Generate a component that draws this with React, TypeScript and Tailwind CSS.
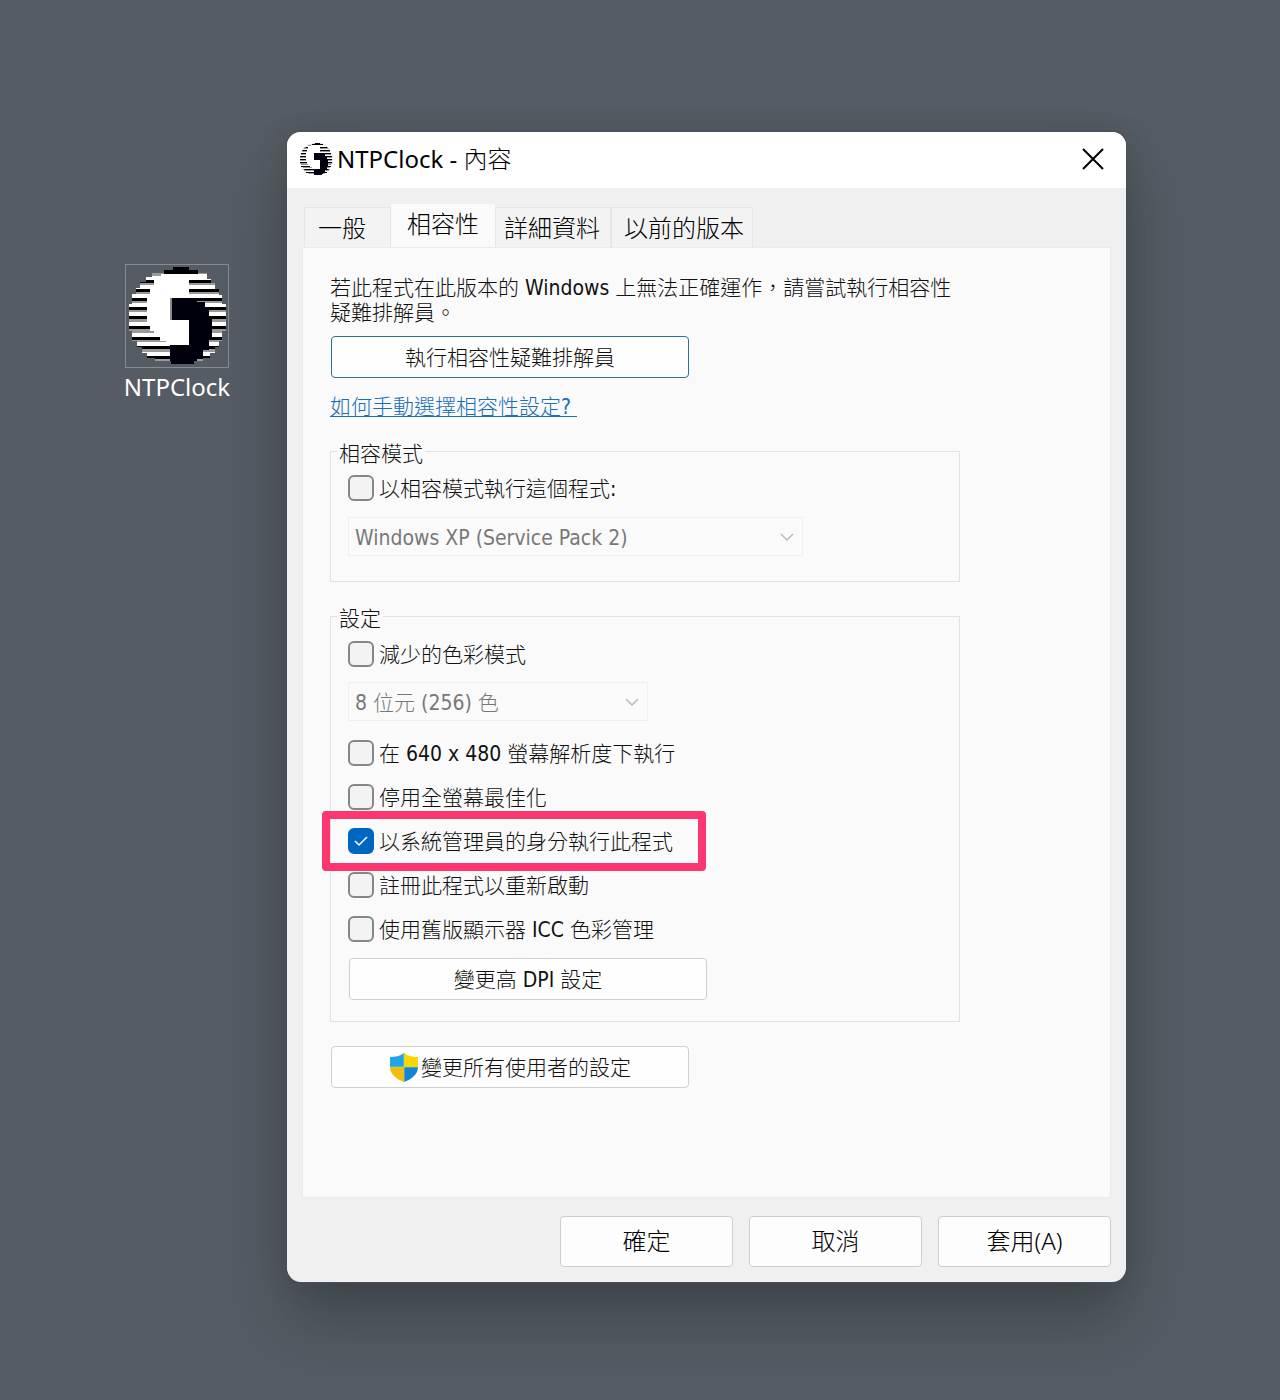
import React, { useState } from 'react';
import clsx from 'clsx';

const TABS = [
  { label: '一般', className: 'w-[87px] pl-[13px]' },
  { label: '相容性', className: 'w-[104px] pl-4' },
  { label: '詳細資料', className: 'w-[116px] pl-2' },
  { label: '以前的版本', className: 'w-[142px] pl-3' },
];

// Rows of the striped globe behind the clock logo
const STRIPES = [16, 25, 34, 43, 52, 62, 73, 82, 92];

const ClockLogo: React.FC<{ className?: string; id: string }> = ({ className, id }) => (
  <svg viewBox="1 1 102 102" className={className} shapeRendering="crispEdges" aria-hidden="true">
    <defs>
      <clipPath id={id}>
        <path d="M48 3h16v3h9v3h9v6h4v4h4v6h4v6h3v9h4v27h-4v10h-3v6h-4v6h-5v5h-7v3h-9v3H46v-3H30v-3h-8v-5h-5v-6h-5v-6H7V67H4V40h3V30h4v-6h4v-6h6v-5h6V9h12V6h9z" />
      </clipPath>
    </defs>
    <g clipPath={`url(#${id})`}>
      <rect width="104" height="104" fill="#9a9a9a" />
      {STRIPES.map((y) => (
        <React.Fragment key={y}>
          <rect y={y - 4} width="104" height="4" fill="#fff" />
          <rect y={y} width="104" height="3" fill="#000" />
        </React.Fragment>
      ))}
      <path d="M48 3h16v3h9v4H39V6h9z" fill="#000" />
      <path d="M36 10h28v70H41v-3h-6v-5h-6v-5h-4v-9h-3V31h3V21h4v-7h7z" fill="#fff" />
      <path d="M64 10h18v3H64z" fill="#fff" />
      <path d="M45 34h27v4h8v6h4v9h3v20h-3v13h-6v6h-6v8H45V81h19V56H45z" fill="#00000c" />
      <path d="M45 34h2v22h-2z" fill="#8a8a8a" />
    </g>
  </svg>
);

const Shield: React.FC = () => (
  <svg viewBox="0 0 30 30" className="size-[30px]" aria-hidden="true">
    <path d="M15 1C11 4 6 5 1 5v10h14z" fill="#22a5e8" />
    <path d="M15 1c4 3 9 4 14 4v10H15z" fill="#fdd800" />
    <path d="M1 15c0 7 6 12 14 15V15z" fill="#f0bd12" />
    <path d="M29 15c0 7-6 12-14 15V15z" fill="#1583d6" />
    <path d="M15 1v29M1 15h28" stroke="#b5d36a" strokeWidth="0.8" />
  </svg>
);

interface CheckProps {
  label: string;
  defaultChecked?: boolean;
  highlighted?: boolean;
}

const Check: React.FC<CheckProps> = ({ label, defaultChecked, highlighted }) => (
  <label className="relative flex w-fit items-center gap-[5px] whitespace-nowrap">
    <span className="grid size-[26px] shrink-0">
      <input
        type="checkbox"
        defaultChecked={defaultChecked}
        className="peer col-start-1 row-start-1 size-[26px] appearance-none rounded-[6px] border-2 border-[#868686] bg-[#f3f3f3] checked:border-[#0067c0] checked:bg-[#0067c0]"
      />
      <svg viewBox="0 0 26 26" className="pointer-events-none invisible col-start-1 row-start-1 peer-checked:visible" aria-hidden="true">
        <path d="M7 13l4 4 8-8" fill="none" stroke="#fff" strokeWidth="1.5" />
      </svg>
    </span>
    <span className="pt-[3px] leading-[23px]">{label}</span>
    {highlighted && (
      <span className="pointer-events-none absolute -inset-y-[17px] -left-[26px] -right-[33px] z-10 rounded-[4px] border-8 border-[#fb3670]" />
    )}
  </label>
);

const DisabledSelect: React.FC<{ value: string; label: string; className?: string }> = ({ value, label, className }) => (
  <div className={clsx('grid h-[39px] items-center', className)}>
    <select
      disabled
      aria-label={label}
      className="col-start-1 row-start-1 h-full w-full appearance-none border border-[#efefef] bg-[#fafafa] pl-[6px] pt-[3px] text-[#787878] opacity-100"
    >
      <option>{value}</option>
    </select>
    <svg viewBox="0 0 14 8" className="pointer-events-none col-start-1 row-start-1 mr-[9px] h-2 w-[14px] justify-self-end" aria-hidden="true">
      <path d="M1 1l6 6 6-6" fill="none" stroke="#b5b5b5" strokeWidth="1.3" />
    </svg>
  </div>
);

const Group: React.FC<{ title: string; className?: string; children: React.ReactNode }> = ({ title, className, children }) => (
  <fieldset className={clsx('min-w-0 border border-[#e2e2e2] pl-[17px]', className)}>
    <legend className="-ml-[11px] px-[2px] pt-[7px] leading-[23px]">{title}</legend>
    {children}
  </fieldset>
);

const PANEL_BUTTON = 'flex h-[42px] w-[358px] items-center justify-center rounded-[4px] border bg-[#fefefe]';

export default function App() {
  const [activeTab, setActiveTab] = useState('相容性');

  return (
    <main
      lang="zh-Hant"
      className="flex min-h-screen items-start gap-14 bg-[#555c63] pb-[118px] pl-[123px] pr-[154px] pt-[132px] font-['Noto_Sans','Noto_Sans_CJK_TC',sans-serif] text-black"
    >
      {/* Desktop shortcut */}
      <button type="button" className="mt-[132px] flex w-[108px] shrink-0 flex-col items-center text-2xl leading-[38px] text-white">
        <span className="border border-[#858c92]">
          <ClockLogo id="desktop-logo" className="size-[102px]" />
        </span>
        NTPClock
      </button>

      <section
        role="dialog"
        aria-label="NTPClock - 內容"
        className="min-w-0 flex-1 overflow-hidden rounded-[14px] bg-[#f0f0f0] shadow-[0_0_0_1px_#4b5157,0_0_30px_rgba(0,0,0,0.12),0_40px_60px_rgba(20,30,30,0.3)]"
      >
        <header className="flex h-14 items-center bg-white pb-[2px] pl-3 pr-[22px]">
          <ClockLogo id="title-logo" className="size-[34px]" />
          <h1 className="ml-1 flex-1 text-2xl leading-8 font-light">
            <span className="font-normal">NTPClock - </span>內容
          </h1>
          <button type="button" aria-label="關閉">
            <svg viewBox="0 0 22 22" className="size-[22px]" aria-hidden="true">
              <path d="M1 1l20 20M21 1L1 21" stroke="#000" strokeWidth="2" />
            </svg>
          </button>
        </header>

        <div className="px-[15px] pb-[15px] pt-4">
          {/* Tabs */}
          <div role="tablist" className="flex h-[43px] items-end pl-[2px] text-2xl font-light">
            {TABS.map((tab) => (
              <button
                key={tab.label}
                type="button"
                role="tab"
                aria-selected={tab.label === activeTab}
                onClick={() => setActiveTab(tab.label)}
                className={clsx(
                  'shrink-0 whitespace-nowrap text-left',
                  tab.className,
                  tab.label === activeTab
                    ? 'h-[43px] bg-[#fafafa] pb-1 leading-[39px]'
                    : 'h-10 border border-b-0 border-[#e6e6e6] bg-[#f3f3f3] leading-[39px]'
                )}
              >
                {tab.label}
              </button>
            ))}
          </div>

          {/* Compatibility page */}
          <div
            role="tabpanel"
            className="border border-[#ebebeb] bg-[#fafafa] pb-[109px] pl-[27px] pr-4 pt-7 font-['DejaVu_Sans_Condensed','Noto_Sans_CJK_TC',sans-serif] text-[21px] leading-[25px] font-light text-[#111]"
          >
            <div className="max-w-[630px]">
              <p>若此程式在此版本的 Windows 上無法正確運作，請嘗試執行相容性疑難排解員。</p>
              <button type="button" className={clsx(PANEL_BUTTON, 'ml-px mt-[10px] border-[#2b7391] pt-[3px]')}>
                執行相容性疑難排解員
              </button>
              <a href="#help" className="mt-[17px] block w-fit whitespace-pre text-[#1a6fb8] underline decoration-1 underline-offset-2">
                {'如何手動選擇相容性設定? '}
              </a>

              <Group title="相容模式" className="mt-4 pb-[25px]">
                <div className="pt-[9px]">
                  <Check label="以相容模式執行這個程式:" />
                </div>
                <DisabledSelect label="相容模式" value="Windows XP (Service Pack 2)" className="mt-4 w-[455px]" />
              </Group>

              <Group title="設定" className="mt-[19px] pb-[21px]">
                <div className="pt-[10px]">
                  <Check label="減少的色彩模式" />
                </div>
                <DisabledSelect label="色彩模式" value="8 位元 (256) 色" className="mt-[15px] w-[300px]" />
                <div className="mt-[19px] flex flex-col gap-[18px]">
                  <Check label="在 640 x 480 螢幕解析度下執行" />
                  <Check label="停用全螢幕最佳化" />
                  <Check label="以系統管理員的身分執行此程式" defaultChecked highlighted />
                  <Check label="註冊此程式以重新啟動" />
                  <Check label="使用舊版顯示器 ICC 色彩管理" />
                </div>
                <button type="button" className={clsx(PANEL_BUTTON, 'ml-px mt-4 border-[#d0d0d0] pt-[3px]')}>
                  變更高 DPI 設定
                </button>
              </Group>

              <button type="button" className={clsx(PANEL_BUTTON, 'ml-px mt-6 gap-[2px] border-[#d0d0d0]')}>
                <Shield />
                <span className="pt-[3px]">變更所有使用者的設定</span>
              </button>
            </div>
          </div>

          <footer className="mt-[18px] flex justify-end gap-4 text-2xl font-light">
            {['確定', '取消', '套用(A)'].map((label) => (
              <button key={label} type="button" className="h-[51px] w-[173px] rounded-[4px] border border-[#cdcdcd] bg-[#fdfdfd] pb-[2px]">
                {label}
              </button>
            ))}
          </footer>
        </div>
      </section>
    </main>
  );
}
